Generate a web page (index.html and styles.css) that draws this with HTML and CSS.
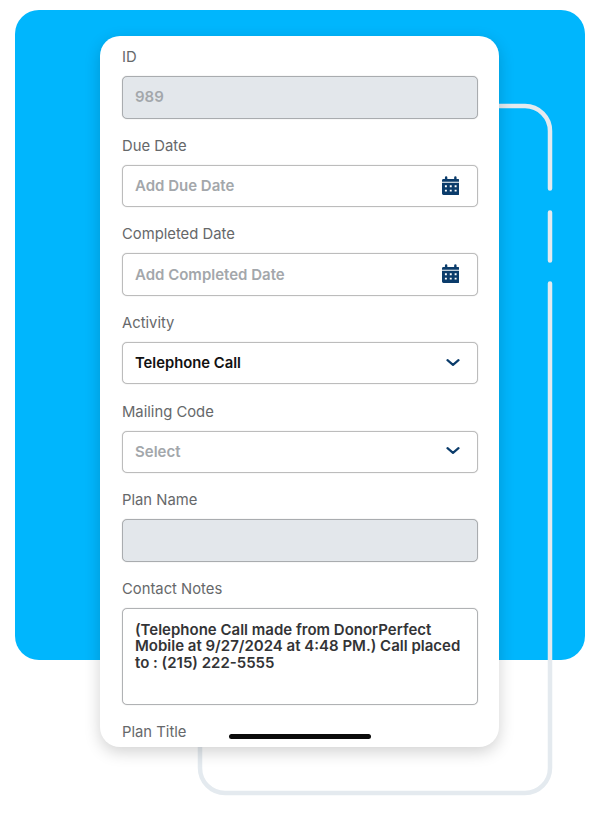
FILE: index.html
```html
<!DOCTYPE html>
<html>
	<head>
		<meta charset="UTF-8">
		<title>Contact</title>
		<link rel="stylesheet" href="styles.css">
	</head>
	<body>
		<div class="stage">
			<div class="panel"></div>
			<svg class="outline" width="600" height="814" viewBox="0 0 600 814">
				<path d="M490 106H525A25 25 0 0 1 550 131V188.500M550 212.500V260.500M550 283.500V768A25 25 0 0 1 525 793H225A25 25 0 0 1 200 768V730"/>
			</svg>

			<form class="card">
				<div class="group">
					<label class="label">ID</label>
					<div class="field disabled"><span class="hint">989</span></div>
				</div>
				<div class="group">
					<label class="label">Due Date</label>
					<div class="field">
						<span class="hint">Add Due Date</span>
						<svg class="calendar" width="17.500" height="19.500" viewBox="0 0 18 20">
							<path d="M3 3V1.500A1 1 0 0 1 5.500 1.500V3H12.500V1.500A1 1 0 0 1 15 1.500V3H16.500A1.500 1.500 0 0 1 18 4.500V6H0V4.500A1.500 1.500 0 0 1 1.500 3Z"/>
							<path fill-rule="evenodd" d="M0 7H18V18A1.500 1.500 0 0 1 16.500 19.500H1.500A1.500 1.500 0 0 1 0 18ZM3 9.500V11.500H5V9.500ZM8 9.500V11.500H10V9.500ZM13 9.500V11.500H15V9.500ZM3 14V16H5V14ZM8 14V16H10V14ZM13 14V16H15V14Z"/>
						</svg>
					</div>
				</div>
				<div class="group">
					<label class="label">Completed Date</label>
					<div class="field">
						<span class="hint">Add Completed Date</span>
						<svg class="calendar" width="17.500" height="19.500" viewBox="0 0 18 20">
							<path d="M3 3V1.500A1 1 0 0 1 5.500 1.500V3H12.500V1.500A1 1 0 0 1 15 1.500V3H16.500A1.500 1.500 0 0 1 18 4.500V6H0V4.500A1.500 1.500 0 0 1 1.500 3Z"/>
							<path fill-rule="evenodd" d="M0 7H18V18A1.500 1.500 0 0 1 16.500 19.500H1.500A1.500 1.500 0 0 1 0 18ZM3 9.500V11.500H5V9.500ZM8 9.500V11.500H10V9.500ZM13 9.500V11.500H15V9.500ZM3 14V16H5V14ZM8 14V16H10V14ZM13 14V16H15V14Z"/>
						</svg>
					</div>
				</div>
				<div class="group">
					<label class="label">Activity</label>
					<div class="field">
						<span class="value">Telephone Call</span>
						<svg class="chevron" width="16" height="8" viewBox="0 0 16 8"><path d="M2.500 1.200L8 5.800L13.500 1.200"/></svg>
					</div>
				</div>
				<div class="group">
					<label class="label">Mailing Code</label>
					<div class="field">
						<span class="hint">Select</span>
						<svg class="chevron" width="16" height="8" viewBox="0 0 16 8"><path d="M2.500 1.200L8 5.800L13.500 1.200"/></svg>
					</div>
				</div>
				<div class="group">
					<label class="label">Plan Name</label>
					<div class="field disabled"></div>
				</div>
				<div class="group">
					<label class="label">Contact Notes</label>
					<div class="field notes">(Telephone Call made from DonorPerfect Mobile at 9/27/2024 at 4:48 PM.) Call placed to : (215) 222-5555</div>
				</div>
				<div class="group">
					<label class="label">Plan Title</label>
				</div>
				<div class="home-bar"></div>
			</form>
		</div>
	</body>
</html>
```

FILE: styles.css
```css
* {
	margin: 0;
	padding: 0;
	box-sizing: border-box;
}

body {
	background: #fff;
	font-family: Inter, "Liberation Sans", sans-serif;
}

.stage {
	position: relative;
	width: 600px;
	height: 814px;
	padding: 36px 0 0 100px;
	overflow: hidden;
}

.panel {
	position: absolute;
	left: 15px;
	top: 10px;
	width: 570px;
	height: 650px;
	background: #00b6fd;
	border-radius: 24px;
}

.outline {
	position: absolute;
	left: 0;
	top: 0;
}

.outline path {
	fill: none;
	stroke: #e4eaef;
	stroke-width: 4.5;
	stroke-linecap: round;
}

.card {
	position: relative;
	display: flex;
	flex-direction: column;
	row-gap: 17.17px;
	width: 399px;
	height: 711px;
	padding: 11px 22px 0;
	background: #fff;
	border-radius: 20px;
	box-shadow: 0 5px 16px rgba(0, 0, 0, 0.18);
	overflow: hidden;
}

.group {
	display: flex;
	flex-direction: column;
	row-gap: 9px;
}

.label {
	height: 20px;
	font-size: 14.800px;
	line-height: 20px;
	color: #66686a;
}

.field {
	display: flex;
	align-items: center;
	justify-content: space-between;
	width: 356px;
	height: 42.500px;
	padding: 0 16px 1px 12px;
	border: 1px solid #bcbcbc;
	border-radius: 5px;
	background: #fff;
	box-shadow: 0 0 1px rgba(0, 0, 0, 0.3);
	font-size: 15px;
}

.disabled {
	background: #e3e7eb;
	border-color: #a9acaf;
}

.hint {
	font-weight: 600;
	color: #a3a7ab;
}

.value {
	font-size: 14.800px;
	font-weight: 600;
	color: #111;
}

.calendar {
	fill: #0b3c6b;
	margin-right: 2px;
}

.chevron {
	fill: none;
	stroke: #0b3c6b;
	stroke-width: 2.200;
	stroke-linecap: round;
	stroke-linejoin: round;
}

.notes {
	display: block;
	height: 97px;
	padding: 13px 12px 0;
	border-color: #b0b2b4;
	font-weight: 600;
	line-height: 16.500px;
	color: #333436;
}

.home-bar {
	position: absolute;
	left: 129px;
	top: 698px;
	width: 142px;
	height: 5px;
	background: #0b0b0b;
	border-radius: 3px;
}
```
